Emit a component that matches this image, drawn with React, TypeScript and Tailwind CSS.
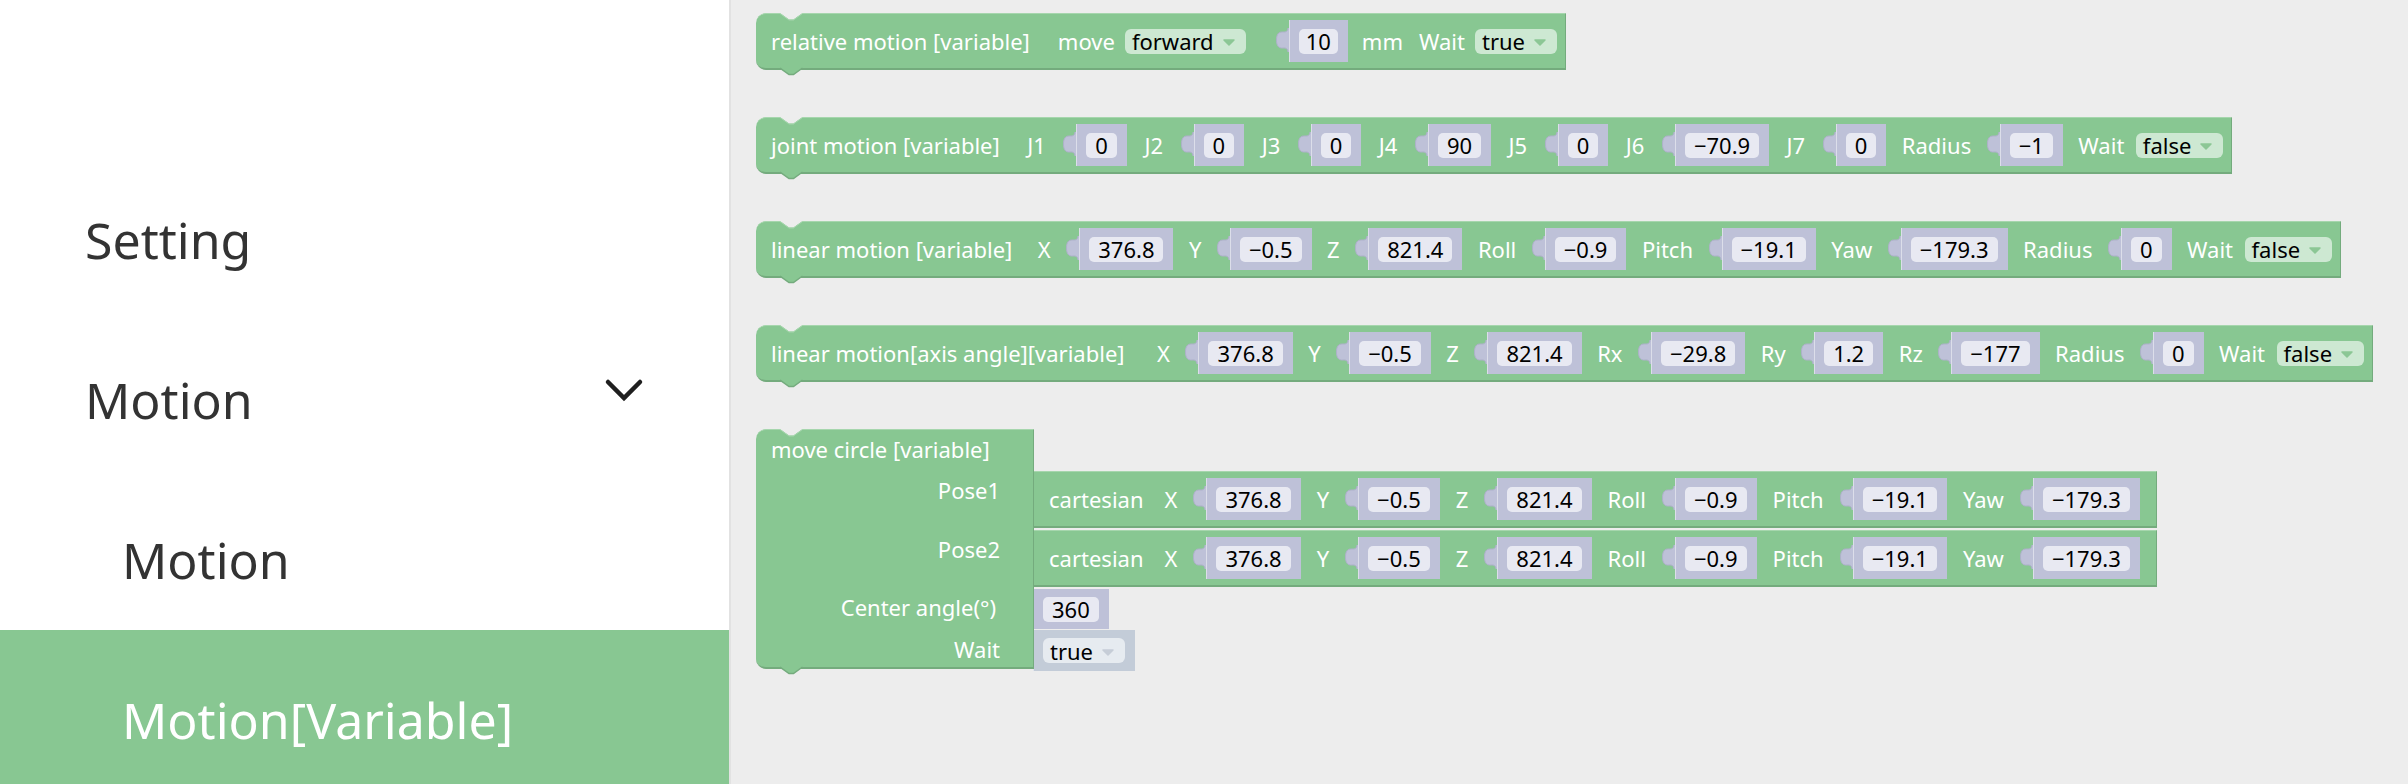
import React from "react";

const TAB_D =
  "M13,8 L12,8 C12,11 10,12.5 7,12 C2,11.5 0.5,15 0.5,20 C0.5,25 2,28.5 7,28 C10,27.5 12,29 12,32 L13,32 Z";
const TAB_LINE =
  "M12,8 C12,11 10,12.5 7,12 C2,11.5 0.5,15 0.5,20 C0.5,25 2,28.5 7,28 C10,27.5 12,29 12,32";

function Tab({ h, fill, stroke }: { h: number; fill: string; stroke: string }) {
  return (
    <svg width={13} height={h} viewBox={`0 0 13 ${h}`} className="block shrink-0 overflow-visible">
      <path d={TAB_D} fill={fill} />
      <path d={TAB_LINE} fill="none" stroke={stroke} strokeWidth={1} />
    </svg>
  );
}

function Field({ v, pad = "px-[9px]" }: { v: string; pad?: string }) {
  return (
    <div className={`flex h-[25px] items-center rounded-[5px] bg-[#e8e9f2] text-[22px] leading-none text-black ${pad}`}>
      {v}
    </div>
  );
}

function Slot({ v, extra = "", pad = "px-[9px]" }: { v: string; extra?: string; pad?: string }) {
  return (
    <div className={`flex h-[42px] shrink-0 items-stretch ${extra}`}>
      <Tab h={42} fill="#bec1d8" stroke="#aeb1ca" />
      <div className="flex items-center border-l border-l-[#dcdeea] bg-[#bec1d8] pl-[9px] pr-[10px]">
        <Field v={v} pad={pad} />
      </div>
    </div>
  );
}

function Arrow({ color }: { color: string }) {
  return (
    <svg width={12} height={7} viewBox="0 0 12 7" className="mt-[3px] block shrink-0">
      <path d="M1,1 H11 L6,6 Z" fill={color} stroke={color} strokeWidth={1.5} strokeLinejoin="round" />
    </svg>
  );
}

function Dropdown({ v }: { v: string }) {
  return (
    <div className="ml-[-4px] flex h-[25px] shrink-0 items-center gap-[9px] rounded-[6px] bg-[#cde8d2] pl-[7px] pr-[11px] text-[22px] leading-none text-black">
      <span>{v}</span>
      <Arrow color="#8cc795" />
    </div>
  );
}

function L({ children, extra = "" }: { children: React.ReactNode; extra?: string }) {
  return <span className={`whitespace-pre text-[22px] leading-none text-white ${extra}`}>{children}</span>;
}

function J({ children }: { children: React.ReactNode }) {
  return <L extra="px-[2px]">{children}</L>;
}

function Notch() {
  return (
    <svg width={24} height={8} viewBox="0 0 24 8" className="absolute left-[24px] top-[-1px] block">
      <path d="M0,0 L9,6.5 H13.5 L22.5,0 Z" fill="#ededed" />
      <path d="M0,0.5 L9,7 H13.5 L22.5,0.5" fill="none" stroke="#a6d6ad" strokeWidth={1} />
    </svg>
  );
}

function BottomTab() {
  return (
    <svg width={24} height={10} viewBox="0 0 24 10" className="absolute left-[24px] bottom-[-8px] block">
      <path d="M0,0 V2 L9,8.5 H13.5 L22.5,2 V0 Z" fill="#88c792" />
      <path d="M0,2 L9,8.5 H13.5 L22.5,2" fill="none" stroke="#74ab7d" strokeWidth={1.5} />
    </svg>
  );
}

function Block({ children, gap = "gap-[15.5px]" }: { children: React.ReactNode; gap?: string }) {
  return (
    <div
      className={`relative flex h-[57px] items-center self-start rounded-l-[10px] border-r border-b-2 border-t border-r-[#74ab7d] border-b-[#74ab7d] border-t-[#a6d6ad] bg-[#88c792] pl-[15px] pr-[8px] ${gap}`}
    >
      <Notch />
      {children}
      <BottomTab />
    </div>
  );
}

function Cartesian({ extra = "" }: { extra?: string }) {
  return (
    <div className={`flex h-[57px] items-stretch ${extra}`}>
      <Tab h={57} fill="#88c792" stroke="#74a97c" />
      <div className="flex items-center gap-[16px] border-r border-b-2 border-t border-r-[#74ab7d] border-b-[#74ab7d] border-t-[#a6d6ad] bg-[#88c792] pl-[16px] pr-[16px]">
        <L extra="mr-[5px]">cartesian</L>
        <L>X</L>
        <Slot v="376.8" />
        <L>Y</L>
        <Slot v="−0.5" />
        <L>Z</L>
        <Slot v="821.4" />
        <L>Roll</L>
        <Slot v="−0.9" />
        <L>Pitch</L>
        <Slot v="−19.1" />
        <L>Yaw</L>
        <Slot v="−179.3" />
      </div>
    </div>
  );
}

function Sidebar() {
  return (
    <div className="h-[784px] w-[731px] shrink-0 border-r-2 border-r-[#e2e2e2] bg-white pt-[150px] text-[50px] text-[#333333]">
      <div className="flex h-[160px] items-center pl-[85px]">
        <span className="pt-[19px] leading-[60px]">Setting</span>
      </div>
      <div className="flex h-[160px] items-center justify-between pl-[85px] pr-[85px]">
        <span className="pt-[19px] leading-[60px]">Motion</span>
        <svg width={40} height={24} viewBox="0 0 40 24" className="block">
          <polyline points="4,4 20,20 36,4" fill="none" stroke="#1f1f1f" strokeWidth={4.5} strokeLinecap="round" strokeLinejoin="miter" />
        </svg>
      </div>
      <div className="flex h-[160px] items-center pl-[122px]">
        <span className="pt-[19px] leading-[60px]">Motion</span>
      </div>
      <div className="flex h-[160px] items-center bg-[#88c792] pl-[122px] text-white">
        <span className="pt-[19px] leading-[60px]">Motion[Variable]</span>
      </div>
    </div>
  );
}

function MoveCircle() {
  return (
    <div className="flex items-start self-start">
      <div className="relative flex h-[240px] w-[278px] shrink-0 flex-col rounded-l-[10px] border-r border-b-2 border-t border-r-[#74ab7d] border-b-[#74ab7d] border-t-[#a6d6ad] bg-[#88c792] text-[22px] text-white">
        <Notch />
        <div className="h-[41px] whitespace-nowrap pl-[15px] leading-[39px]">move circle [variable]</div>
        <div className="h-[59px] pr-[33px] text-right leading-[39px]">Pose1</div>
        <div className="h-[59px] pr-[33px] text-right leading-[39px]">Pose2</div>
        <div className="h-[41px] whitespace-nowrap pr-[37px] text-right leading-[37px]">Center angle(°)</div>
        <div className="h-[37px] pr-[33px] text-right leading-[39px]">Wait</div>
        <BottomTab />
      </div>
      <div className="ml-[-14px] mt-[42px] flex flex-col items-start">
        <Cartesian extra="mb-[2px]" />
        <Cartesian extra="mb-[2px]" />
        <div className="mb-[1px] flex h-[40px] items-stretch">
          <Tab h={40} fill="#bec1d8" stroke="#aeb1ca" />
          <div className="flex items-center border-l border-l-[#dcdeea] bg-[#bec1d8] pl-[9px] pr-[10px]">
            <Field v="360" />
          </div>
        </div>
        <div className="flex h-[41px] items-stretch">
          <Tab h={41} fill="#c3ccd8" stroke="#b0b9c6" />
          <div className="flex items-center border-l border-l-[#e0e5ec] bg-[#c3ccd8] pl-[9px] pr-[10px]">
            <div className="flex h-[25px] items-center gap-[9px] rounded-[6px] bg-[#e6ebf0] pl-[7px] pr-[11px] text-[22px] leading-none text-black">
              <span>true</span>
              <Arrow color="#c6cdd7" />
            </div>
          </div>
        </div>
      </div>
    </div>
  );
}

export default function App() {
  return (
    <div className="flex h-[784px] w-[2408px] overflow-hidden font-['Noto_Sans',sans-serif]">
      <Sidebar />
      <div className="flex h-[784px] flex-1 flex-col gap-[47px] bg-[#ededed] pl-[25px] pt-[13px]">
        <Block gap="gap-[14px]">
          <L extra="mr-[14px]">relative motion [variable]</L>
          <L>move</L>
          <Dropdown v="forward" />
          <Slot v="10" extra="ml-[16px]" pad="px-[7px]" />
          <L extra="mr-[2px]">mm</L>
          <L>Wait</L>
          <Dropdown v="true" />
        </Block>
        <Block>
          <L extra="mr-[10px]">joint motion [variable]</L>
          <J>J1</J>
          <Slot v="0" />
          <J>J2</J>
          <Slot v="0" />
          <J>J3</J>
          <Slot v="0" />
          <J>J4</J>
          <Slot v="90" />
          <J>J5</J>
          <Slot v="0" />
          <J>J6</J>
          <Slot v="−70.9" />
          <J>J7</J>
          <Slot v="0" />
          <L>Radius</L>
          <Slot v="−1" />
          <L>Wait</L>
          <Dropdown v="false" />
        </Block>
        <Block>
          <L extra="mr-[10px]">linear motion [variable]</L>
          <L>X</L>
          <Slot v="376.8" />
          <L>Y</L>
          <Slot v="−0.5" />
          <L>Z</L>
          <Slot v="821.4" />
          <L>Roll</L>
          <Slot v="−0.9" />
          <L>Pitch</L>
          <Slot v="−19.1" />
          <L>Yaw</L>
          <Slot v="−179.3" />
          <L>Radius</L>
          <Slot v="0" />
          <L>Wait</L>
          <Dropdown v="false" />
        </Block>
        <Block>
          <L extra="mr-[17px]">linear motion[axis angle][variable]</L>
          <L>X</L>
          <Slot v="376.8" />
          <L>Y</L>
          <Slot v="−0.5" />
          <L>Z</L>
          <Slot v="821.4" />
          <L>Rx</L>
          <Slot v="−29.8" />
          <L>Ry</L>
          <Slot v="1.2" />
          <L>Rz</L>
          <Slot v="−177" />
          <L>Radius</L>
          <Slot v="0" />
          <L>Wait</L>
          <Dropdown v="false" />
        </Block>
        <MoveCircle />
      </div>
    </div>
  );
}
